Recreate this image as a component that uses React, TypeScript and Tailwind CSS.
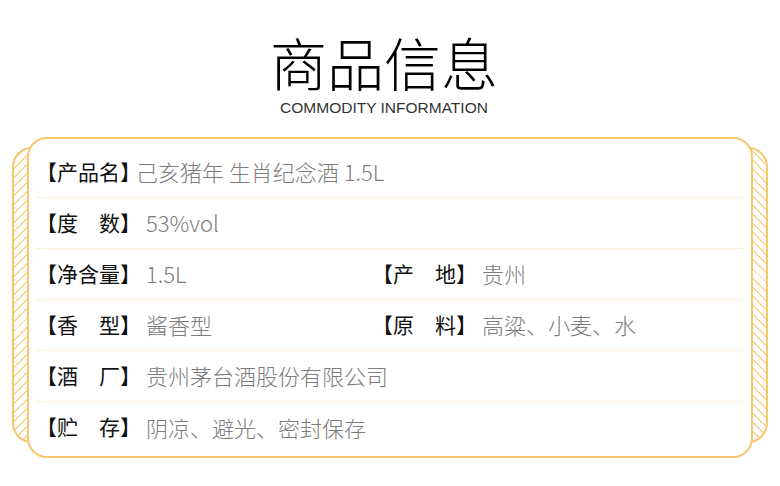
const cjk = "font-['Noto_Sans_CJK_SC','Noto_Sans',sans-serif]";

type Cell = { label: string; value: string };

const rows: Cell[][] = [
  [{ label: "【产品名】", value: "己亥猪年 生肖纪念酒 1.5L" }],
  [{ label: "【度　数】", value: "53%vol" }],
  [
    { label: "【净含量】", value: "1.5L" },
    { label: "【产　地】", value: "贵州" },
  ],
  [
    { label: "【香　型】", value: "酱香型" },
    { label: "【原　料】", value: "高粱、小麦、水" },
  ],
  [{ label: "【酒　厂】", value: "贵州茅台酒股份有限公司" }],
  [{ label: "【贮　存】", value: "阴凉、避光、密封保存" }],
];

function Field({ cell, first, wide }: { cell: Cell; first: boolean; wide: boolean }) {
  return (
    <div className={`flex items-center whitespace-nowrap ${wide ? "col-span-2" : ""}`}>
      <span className="text-[21px] text-[#111]">{cell.label}</span>
      <span
        className={`text-[22px] font-light text-[#7c7c7c] ${first ? "-ml-[5px]" : "ml-[5px]"}`}
      >
        {cell.value}
      </span>
    </div>
  );
}

export default function App() {
  return (
    <div className={`w-[780px] h-[486px] bg-white overflow-hidden ${cjk}`}>
      <div className="flex flex-col items-center pt-[31px] pr-[12px]">
        <h1 className="text-[57px] leading-[60px] font-light text-black">
          商品信息
        </h1>
        <p className="mt-[9px] text-[15.5px] leading-none font-['Liberation_Sans',sans-serif] text-[#333]">
          COMMODITY INFORMATION
        </p>
      </div>

      <div className="relative mx-[12px] mt-[21px]">
        {/* hatched back card */}
        <div className="absolute inset-x-0 top-[10px] bottom-[15px] rounded-[20px] border-2 border-[#f6c76f] overflow-hidden flex">
          <div className="flex-1 bg-[repeating-linear-gradient(135deg,#f8d48c_0_1.4px,transparent_1.4px_6.4px)]" />
          <div className="flex-1 bg-[repeating-linear-gradient(45deg,#f8d48c_0_1.4px,transparent_1.4px_6.4px)]" />
        </div>

        <div className="relative mx-[15px] rounded-[20px] border-2 border-[#f6c76f] bg-white px-[7px] pt-[8px] pb-[3px]">
          {rows.map((row, i) => (
            <div
              key={i}
              className={`grid grid-cols-[336px_1fr] items-center h-[51px] ${
                i < rows.length - 1 ? "border-b border-[#fcf0d8]" : ""
              }`}
            >
              {row.map((cell, j) => (
                <Field key={j} cell={cell} first={i === 0} wide={row.length === 1} />
              ))}
            </div>
          ))}
        </div>
      </div>
    </div>
  );
}
